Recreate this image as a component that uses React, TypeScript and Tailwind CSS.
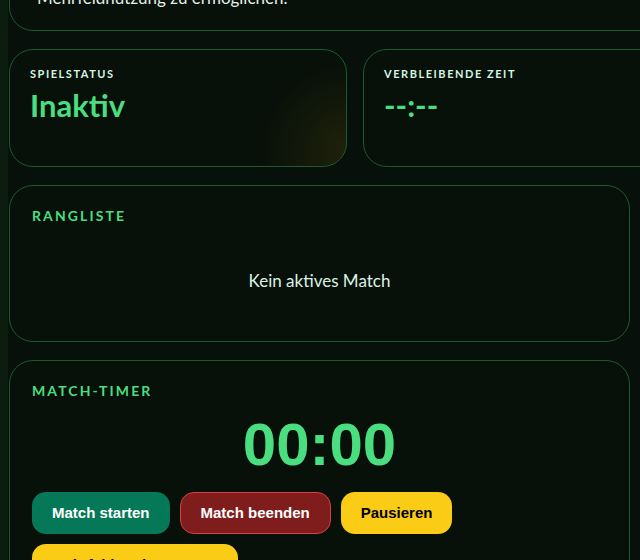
const heading = "font-['Lato','Noto_Sans',sans-serif]";
const arial = "font-['Liberation_Sans',Arial,sans-serif]";

function StatCard({ label, value, glow }: { label: string; value: string; glow?: boolean }) {
  return (
    <div
      className={`h-[118px] rounded-3xl border border-[#1e5a2b] bg-[#071009] px-5 pt-4 ${
        glow ? "bg-[radial-gradient(circle_at_100%_85%,rgba(202,160,20,0.12),transparent_25%)]" : ""
      }`}
    >
      <p className={`${heading} text-[11px] leading-4 font-bold tracking-[0.14em] text-[#d6f5e0] uppercase`}>
        {label}
      </p>
      <p className={`${heading} mt-2 text-[31px] leading-none font-bold text-[#4ade80]`}>{value}</p>
    </div>
  );
}

function Button({ children, className }: { children: React.ReactNode; className: string }) {
  return (
    <button className={`${arial} h-[42px] rounded-[14px] px-5 text-[15px] font-bold ${className}`}>
      {children}
    </button>
  );
}

export default function App() {
  return (
    <div className="flex h-screen w-full overflow-hidden bg-[#07100a]">
      <div className="w-2 shrink-0 bg-[#0c1d10]" />

      <main className="-mt-[43px] flex w-[622px] shrink-0 flex-col gap-[18px] pl-px">
        <div className="w-[692px] rounded-3xl border border-[#1e5a2b] bg-[#071009] px-[27px] pt-[28px] pb-[20px]">
          <p className={`${heading} text-[17px] leading-6 text-[#e2efe6]`}>
            Mehrfeldnutzung zu ermöglichen.
          </p>
        </div>

        <div className="grid w-[692px] grid-cols-2 gap-4">
          <StatCard label="Spielstatus" value="Inaktiv" glow />
          <StatCard label="Verbleibende Zeit" value="--:--" />
        </div>

        <section className="rounded-3xl border border-[#1e5a2b] bg-[#071009] px-[22px] pt-5 pb-5">
          <h2 className={`${heading} text-sm leading-5 font-bold tracking-[0.15em] text-[#4ade80] uppercase`}>
            Rangliste
          </h2>
          <div className="pt-[43px] pb-[28px] text-center">
            <p className={`${heading} text-[17px] leading-6 text-[#dcf3e3]`}>Kein aktives Match</p>
          </div>
        </section>

        <section className="rounded-3xl border border-[#1e5a2b] bg-[#071009] px-[22px] pt-5 pb-6">
          <h2 className={`${heading} text-sm leading-5 font-bold tracking-[0.15em] text-[#4ade80] uppercase`}>
            Match-Timer
          </h2>
          <p className={`${arial} mt-[14px] text-center text-6xl leading-none font-bold text-[#4ade80]`}>00:00</p>
          <div className="mt-[17px] flex flex-wrap gap-2.5">
            <Button className="bg-[#047857] text-white">Match starten</Button>
            <Button className="border border-[#dc3f3f] bg-[#7f1d1d] text-white">Match beenden</Button>
            <Button className="bg-[#facc15] text-black">Pausieren</Button>
            <Button className="bg-[#facc15] text-black">Mehrfeldmodus starten</Button>
          </div>
        </section>
      </main>
    </div>
  );
}
